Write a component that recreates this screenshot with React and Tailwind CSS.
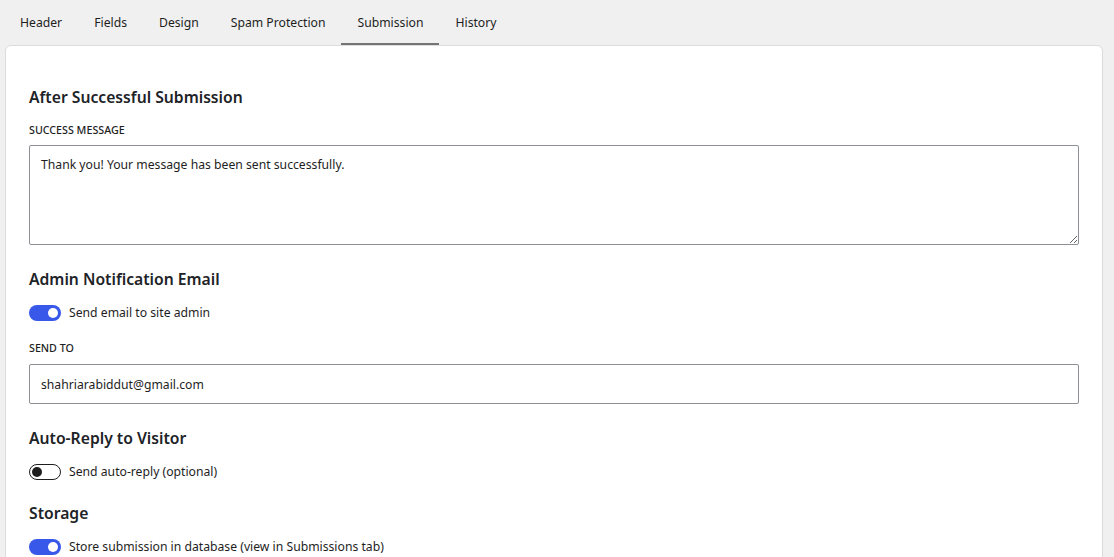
import { useState } from "react";

const TABS = ["Header", "Fields", "Design", "Spam Protection", "Submission", "History"];

function Toggle({ on, onChange }) {
  return (
    <button
      type="button"
      onClick={onChange}
      className={`relative w-8 h-4 rounded-full shrink-0 ${
        on ? "bg-[#3858e9]" : "bg-white border border-[#1e1e1e]"
      }`}
    >
      <span
        className={`absolute top-1/2 -translate-y-1/2 w-[10px] h-[10px] rounded-full ${
          on ? "right-[3px] bg-white" : "left-[2px] bg-[#1e1e1e]"
        }`}
      />
    </button>
  );
}

function SectionTitle({ children, className = "" }) {
  return (
    <h3 className={`text-[15.7px] leading-6 font-semibold text-[#1d2327] ${className}`}>{children}</h3>
  );
}

function FieldLabel({ children, className = "" }) {
  return (
    <label className={`block text-[10.7px] leading-4 uppercase font-medium text-[#1e1e1e] ${className}`}>
      {children}
    </label>
  );
}

function ToggleRow({ on, onChange, label, className = "" }) {
  return (
    <div className={`flex items-center gap-2 h-5 ${className}`}>
      <Toggle on={on} onChange={onChange} />
      <span className="text-[12.2px] text-[#1e1e1e]">{label}</span>
    </div>
  );
}

export default function App() {
  const [active, setActive] = useState("Submission");
  const [adminEmail, setAdminEmail] = useState(true);
  const [autoReply, setAutoReply] = useState(false);
  const [store, setStore] = useState(true);

  return (
    <div
      className="min-h-screen bg-[#f0f0f0] text-[#1e1e1e]"
      style={{ fontFamily: '"Noto Sans", "Open Sans", sans-serif' }}
    >
      {/* Tabs */}
      <div className="flex px-1 h-[45px]">
        {TABS.map((t) => (
          <button
            key={t}
            onClick={() => setActive(t)}
            className={`px-4 h-[45px] pt-[3px] text-[12.2px] border-b-2 ${
              active === t ? "border-[#757575]" : "border-transparent"
            }`}
          >
            {t}
          </button>
        ))}
      </div>

      {/* Panel */}
      <div className="ml-[5px] mr-[11px] bg-white border border-[#dcdcde] rounded-md px-[23px] pt-[39px] pb-10">
        <SectionTitle>After Successful Submission</SectionTitle>
        <FieldLabel className="mt-[13px]">Success Message</FieldLabel>
        <textarea
          defaultValue="Thank you! Your message has been sent successfully."
          className="mt-[7px] block w-full h-[100px] border border-[#8c8f94] rounded-[2px] px-[11px] py-[9px] text-[12.2px] leading-5 text-[#1e1e1e] outline-none"
        />

        <SectionTitle className="mt-[22px]">Admin Notification Email</SectionTitle>
        <ToggleRow
          className="mt-[12px]"
          on={adminEmail}
          onChange={() => setAdminEmail(!adminEmail)}
          label="Send email to site admin"
        />
        <FieldLabel className="mt-[17px]">Send to</FieldLabel>
        <input
          defaultValue="shahriarabiddut@gmail.com"
          className="mt-[8px] block w-full h-10 border border-[#8c8f94] rounded-[2px] px-[11px] text-[12.2px] text-[#1e1e1e] outline-none"
        />

        <SectionTitle className="mt-[22px]">Auto-Reply to Visitor</SectionTitle>
        <ToggleRow
          className="mt-[12px]"
          on={autoReply}
          onChange={() => setAutoReply(!autoReply)}
          label="Send auto-reply (optional)"
        />

        <SectionTitle className="mt-[19px]">Storage</SectionTitle>
        <ToggleRow
          className="mt-[12px]"
          on={store}
          onChange={() => setStore(!store)}
          label="Store submission in database (view in Submissions tab)"
        />
      </div>
    </div>
  );
}
